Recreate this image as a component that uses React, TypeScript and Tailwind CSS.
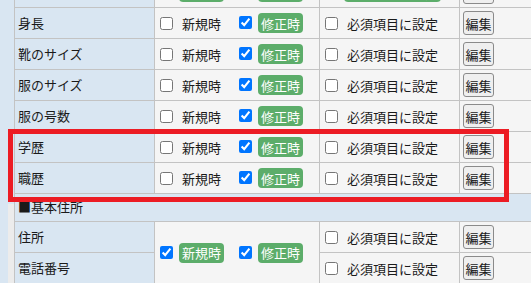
import React from "react";

type Item = { label: string; create: boolean; update: boolean; required: boolean };

const items: Item[] = [
  { label: "", create: true, update: true, required: true },
  { label: "身長", create: false, update: true, required: false },
  { label: "靴のサイズ", create: false, update: true, required: false },
  { label: "服のサイズ", create: false, update: true, required: false },
  { label: "服の号数", create: false, update: true, required: false },
  { label: "学歴", create: false, update: true, required: false },
  { label: "職歴", create: false, update: true, required: false },
];

const Check = ({ checked }: { checked?: boolean }) => (
  <input type="checkbox" defaultChecked={checked} className="m-0 h-[13px] w-[13px] shrink-0" />
);

const Flag = ({ on, children }: { on: boolean; children: React.ReactNode }) => (
  <span
    className={
      on
        ? "flex h-[20px] items-center rounded-[4px] bg-[#5cad6a] px-[3px] text-white"
        : "flex h-[20px] items-center px-[3px] text-[#1a1a1a]"
    }
  >
    {children}
  </span>
);

const Label = ({ text }: { text: string }) => (
  <div className="flex h-[30px] items-center bg-[#d9e6f2] pb-[2px] pl-[3px] text-[#1a1a1a]">{text}</div>
);

const Timing = ({ create, update }: { create: boolean; update: boolean }) => (
  <div className="flex h-full items-center bg-[#f5f5f5] pl-[5px]">
    <Check checked={create} />
    <div className="ml-[6px]">
      <Flag on={create}>新規時</Flag>
    </div>
    <div className="ml-[15px]">
      <Check checked={update} />
    </div>
    <div className="ml-[6px]">
      <Flag on={update}>修正時</Flag>
    </div>
  </div>
);

const Required = ({ on }: { on: boolean }) => (
  <div className="flex h-[30px] items-center gap-[6px] bg-[#f5f5f5] pl-[5px]">
    <Check checked={on} />
    <Flag on={on}>必須項目に設定</Flag>
  </div>
);

const Edit = () => (
  <div className="flex h-[30px] items-center bg-[#f5f5f5] pl-[3px]">
    <button className="flex h-[24px] w-[31px] items-center justify-center rounded-[3px] border border-[#8a8a8a] bg-[#efefef] text-[13px] text-[#1a1a1a]">
      編集
    </button>
  </div>
);

export default function App() {
  return (
    <div className="relative flex h-[283px] w-[531px] overflow-hidden bg-[#d9e6f2] font-['Noto_Sans_CJK_JP','Noto_Sans',sans-serif] text-[13px] leading-none">
      {/* left strip */}
      <div className="flex w-[14px] shrink-0 flex-col">
        <div className="h-[204px]" />
        <div className="flex flex-1">
          <div className="w-[8px]" />
          <div className="w-[6px] bg-[#ececec]" />
        </div>
      </div>

      {/* table */}
      <div className="-mt-[23px] grid shrink-0 grid-cols-[139px_164px_139px_90px] gap-px self-start border-l border-[#c3c3c3] bg-[#c3c3c3]">
        {items.map((it, i) => (
          <React.Fragment key={i}>
            <Label text={it.label} />
            <div className="h-[30px]">
              <Timing create={it.create} update={it.update} />
            </div>
            <Required on={it.required} />
            <Edit />
          </React.Fragment>
        ))}

        <div className="col-span-4 flex h-[27px] items-center bg-[#d9e6f2] pb-[2px] pl-[3px] text-[#1a1a1a]">
          ■基本住所
        </div>

        <Label text="住所" />
        <div className="row-span-2">
          <Timing create={true} update={true} />
        </div>
        <Required on={false} />
        <Edit />
        <Label text="電話番号" />
        <Required on={false} />
        <Edit />
      </div>

      {/* highlight */}
      <div className="absolute left-[8px] top-[129px] h-[73px] w-[501px] border-[5px] border-[#ec1c24]" />
    </div>
  );
}
